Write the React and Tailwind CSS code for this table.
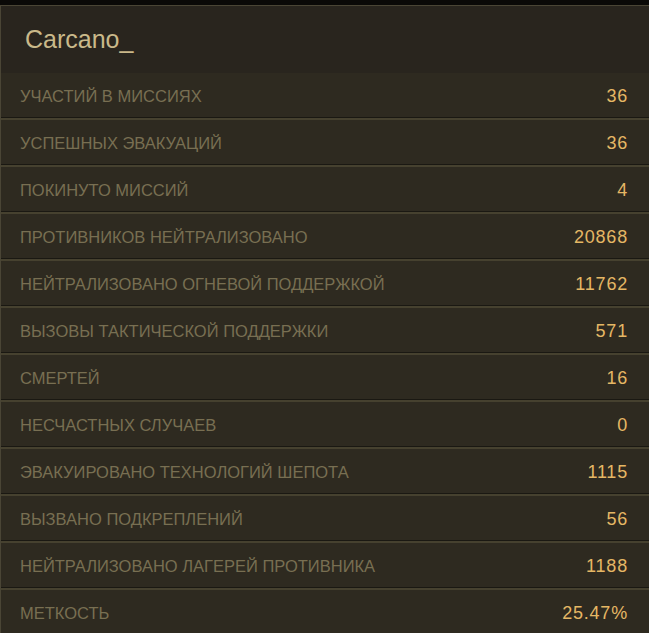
const stats = [
  ['УЧАСТИЙ В МИССИЯХ', '36'],
  ['УСПЕШНЫХ ЭВАКУАЦИЙ', '36'],
  ['ПОКИНУТО МИССИЙ', '4'],
  ['ПРОТИВНИКОВ НЕЙТРАЛИЗОВАНО', '20868'],
  ['НЕЙТРАЛИЗОВАНО ОГНЕВОЙ ПОДДЕРЖКОЙ', '11762'],
  ['ВЫЗОВЫ ТАКТИЧЕСКОЙ ПОДДЕРЖКИ', '571'],
  ['СМЕРТЕЙ', '16'],
  ['НЕСЧАСТНЫХ СЛУЧАЕВ', '0'],
  ['ЭВАКУИРОВАНО ТЕХНОЛОГИЙ ШЕПОТА', '1115'],
  ['ВЫЗВАНО ПОДКРЕПЛЕНИЙ', '56'],
  ['НЕЙТРАЛИЗОВАНО ЛАГЕРЕЙ ПРОТИВНИКА', '1188'],
  ['МЕТКОСТЬ', '25.47%'],
]

export default function App() {
  return (
    <div className="h-[633px] w-[649px] overflow-hidden bg-[#0a0907] pt-[5px] font-['Liberation_Sans',sans-serif]">
      <div className="border-l border-t border-[#4a4535] bg-[#29251e]">
        {/* Player name */}
        <div className="flex h-[67px] items-center pl-[24px] text-[25px] text-[#c9b98a]">
          Carcano_
        </div>

        {/* Stats list */}
        <div className="bg-[#2e2a20]">
          {stats.map(([label, value]) => (
            <div
              key={label}
              className="flex h-[47px] items-center justify-between border-b-2 border-b-[#46412f] pl-[19px] pr-[21px] pt-[2px] shadow-[inset_0_-1px_0_#1a1812]"
            >
              <span className="text-[16.5px] text-[#786f52]">{label}</span>
              <span className="text-[18px] tracking-[0.8px] text-[#e5b765]">{value}</span>
            </div>
          ))}
        </div>
      </div>
    </div>
  )
}
